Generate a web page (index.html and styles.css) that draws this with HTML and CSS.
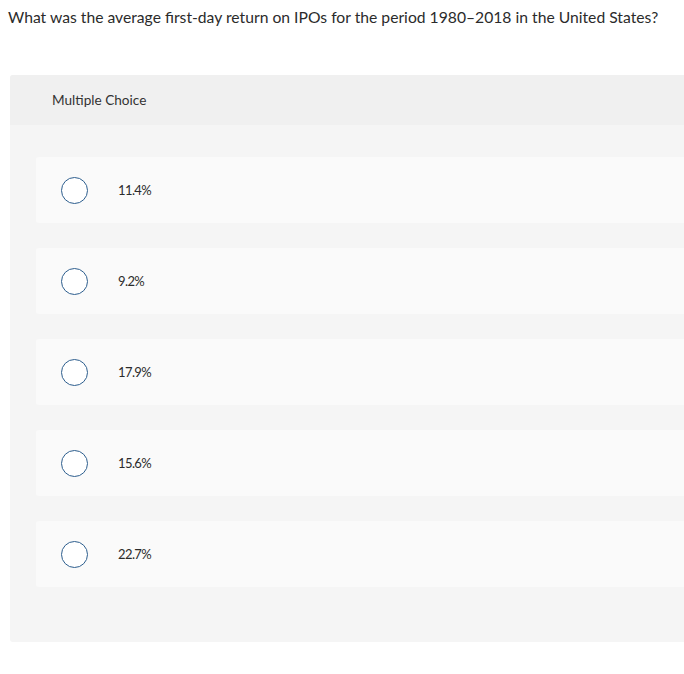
FILE: index.html
```html
<!DOCTYPE html>
<html>
<head>
<meta charset="utf-8">
<link rel="stylesheet" href="styles.css">
</head>
<body>
<p class="question">What was the average first-day return on IPOs for the period 1980–2018 in the United States?</p>
<div class="card">
  <div class="card-head">Multiple Choice</div>
  <div class="card-body">
    <div class="option"><span class="radio"></span><span class="label">11.4%</span></div>
    <div class="option"><span class="radio"></span><span class="label">9.2%</span></div>
    <div class="option"><span class="radio"></span><span class="label">17.9%</span></div>
    <div class="option"><span class="radio"></span><span class="label">15.6%</span></div>
    <div class="option"><span class="radio"></span><span class="label">22.7%</span></div>
  </div>
</div>
</body>
</html>
```
FILE: styles.css
```css
html, body {
  margin: 0;
  padding: 0;
  background: #fff;
}
body {
  font-family: "Lato", "Liberation Sans", sans-serif;
  color: #222;
}
.question {
  margin: 0;
  padding: 7px 0 0 8px;
  font-size: 15.7px;
  line-height: 20px;
  color: #2b2b2b;
}
.card {
  margin: 48px 0 0 10px;
  background: #f5f5f5;
  border-radius: 3px 0 0 3px;
}
.card-head {
  height: 50px;
  background: #f0f0f0;
  border-radius: 3px 0 0 0;
  padding-left: 42px;
  display: flex;
  align-items: center;
  font-size: 13.6px;
  color: #333;
}
.card-body {
  padding: 32px 0 55px 26px;
  display: flex;
  flex-direction: column;
  gap: 25px;
}
.option {
  height: 66px;
  background: #fafafa;
  border-radius: 3px 0 0 3px;
  display: flex;
  align-items: center;
  padding-left: 25px;
}
.radio {
  width: 25px;
  height: 25px;
  border: 1.5px solid #2d5e8e;
  border-radius: 50%;
  background: #fff;
  flex: none;
}
.label {
  margin-left: 30px;
  font-size: 13px;
  letter-spacing: -0.6px;
  color: #2b2b2b;
}
```
